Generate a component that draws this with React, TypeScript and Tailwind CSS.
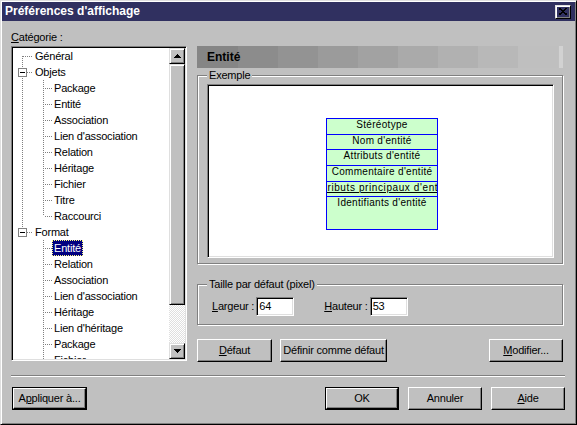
import React from "react";

const raised =
  "border border-t-white border-l-white border-r-black border-b-black shadow-[inset_-1px_-1px_0_#808080]";
const raised2 =
  "border border-t-[#dfdfdf] border-l-[#dfdfdf] border-r-black border-b-black shadow-[inset_1px_1px_0_#fff,inset_-1px_-1px_0_#808080]";
const sunken =
  "border border-t-[#808080] border-l-[#808080] border-r-white border-b-white shadow-[inset_1px_1px_0_#000,inset_-1px_-1px_0_#dfdfdf]";
const etched = "border border-[#808080] shadow-[inset_1px_1px_0_#fff,1px_1px_0_#fff]";

function Btn({ children, className, def }: { children: React.ReactNode; className: string; def?: boolean }) {
  if (def) {
    return (
      <div className={"border border-black flex " + className}>
        <div className={raised + " flex-1 flex items-center justify-center leading-[13px]"}>{children}</div>
      </div>
    );
  }
  return (
    <div className={raised + " flex items-center justify-center leading-[13px] " + className}>{children}</div>
  );
}

const dot = { stroke: "#808080", strokeDasharray: "1 1" };

function RootConn({ kind, box }: { kind: "first" | "mid" | "last"; box?: boolean }) {
  return (
    <svg width="20" height="16" className="shrink-0" shapeRendering="crispEdges">
      {kind === "first" && <line x1="9.5" y1="8" x2="9.5" y2="16" {...dot} />}
      {kind === "mid" && <line x1="9.5" y1="0" x2="9.5" y2="16" {...dot} />}
      {kind === "last" && <line x1="9.5" y1="0" x2="9.5" y2="8" {...dot} />}
      <line x1={box ? 14 : 10} y1="8.5" x2="20" y2="8.5" {...dot} />
      {box && (
        <>
          <rect x="5.5" y="4.5" width="8" height="8" fill="#fff" stroke="#808080" />
          <line x1="7" y1="8.5" x2="12" y2="8.5" stroke="#000" />
        </>
      )}
    </svg>
  );
}

function ChildConn({ cont, last }: { cont: boolean; last?: boolean }) {
  return (
    <svg width="39" height="16" className="shrink-0" shapeRendering="crispEdges">
      {cont && <line x1="9.5" y1="0" x2="9.5" y2="16" {...dot} />}
      <line x1="30.5" y1="0" x2="30.5" y2={last ? 8 : 16} {...dot} />
      <line x1="32" y1="8.5" x2="39" y2="8.5" {...dot} />
    </svg>
  );
}

type Row = {
  t: string;
  root?: "first" | "mid" | "last";
  box?: boolean;
  cont?: boolean;
  last?: boolean;
  sel?: boolean;
};

const rows: Row[] = [
  { t: "Général", root: "first" },
  { t: "Objets", root: "mid", box: true },
  { t: "Package", cont: true },
  { t: "Entité", cont: true },
  { t: "Association", cont: true },
  { t: "Lien d'association", cont: true },
  { t: "Relation", cont: true },
  { t: "Héritage", cont: true },
  { t: "Fichier", cont: true },
  { t: "Titre", cont: true },
  { t: "Raccourci", cont: true, last: true },
  { t: "Format", root: "last", box: true },
  { t: "Entité", cont: false, sel: true },
  { t: "Relation", cont: false },
  { t: "Association", cont: false },
  { t: "Lien d'association", cont: false },
  { t: "Héritage", cont: false },
  { t: "Lien d'héritage", cont: false },
  { t: "Package", cont: false },
  { t: "Fichier", cont: false },
];

function Arrow({ up }: { up?: boolean }) {
  return (
    <svg width="7" height="4" shapeRendering="crispEdges">
      {up ? <polygon points="3.5,0 7,4 0,4" fill="#000" /> : <polygon points="0,0 7,0 3.5,4" fill="#000" />}
    </svg>
  );
}

export default function App() {
  return (
    <div className="w-[577px] h-[425px] bg-[#c0c0c0] border border-t-[#dfdfdf] border-l-[#dfdfdf] border-r-black border-b-black shadow-[inset_1px_1px_0_#fff,inset_-1px_-1px_0_#808080] p-[1px] flex flex-col overflow-hidden font-['Liberation_Sans',Arial,sans-serif] text-[11px] tracking-[-0.2px] text-black">
      {/* caption */}
      <div className="h-[19px] shrink-0 bg-[#303060] flex items-center justify-between pl-[3px] pr-[4px]">
        <span className="text-white font-bold text-[12px] tracking-normal leading-[19px]">Préférences d'affichage</span>
        <div className={raised2 + " w-[16px] h-[14px] flex items-center justify-center"}>
          <svg width="8" height="7" shapeRendering="crispEdges">
            <path d="M0 0 L8 7 M8 0 L0 7" stroke="#000" strokeWidth="1.6" />
          </svg>
        </div>
      </div>

      <div className="pl-[9px] pr-[12px]">
        <div className="mt-[10px] leading-[13px]">
          <u>C</u>atégorie :
        </div>
        <div className="mt-[2px] flex gap-[10px] h-[316px]">
          {/* tree */}
          <div className={sunken + " w-[176px] h-[315px] p-[1px] bg-white flex"}>
            <div className="flex-1 overflow-hidden flex flex-col">
              {rows.map((r, i) => (
                <div key={i} className="flex h-[16px] shrink-0 items-center">
                  {r.root ? <RootConn kind={r.root} box={r.box} /> : <ChildConn cont={!!r.cont} last={r.last} />}
                  <span
                    className={
                      "px-[2px] h-[16px] leading-[16px] whitespace-nowrap " +
                      (r.sel
                        ? "bg-[#000080] text-white outline-1 outline-dotted outline-[#ffff80] -outline-offset-1"
                        : "")
                    }
                  >
                    {r.t}
                  </span>
                </div>
              ))}
            </div>
            <div className="w-[16px] flex flex-col bg-[#c0c0c0]">
              <div className={raised2 + " h-[16px] flex items-center justify-center"}>
                <Arrow up />
              </div>
              <div className={raised2 + " h-[241px]"} />
              <div className="flex-1 bg-[repeating-conic-gradient(#dfdfdf_0%_25%,#ffffff_0%_50%)] bg-size-[2px_2px]" />
              <div className={raised2 + " h-[16px] flex items-center justify-center"}>
                <Arrow />
              </div>
            </div>
          </div>

          {/* right column */}
          <div className="w-[366px] flex flex-col">
            <div className="h-[22px] flex gap-[1px]">
              <div className="w-[361px] h-[22px] pl-[10px] font-bold text-[12px] tracking-normal leading-[22px] bg-[linear-gradient(to_right,#858585_0px_41px,#8c8c8c_41px_81px,#939393_81px_121px,#9b9b9b_121px_161px,#a2a2a2_161px_201px,#aaaaaa_201px_241px,#b1b1b1_241px_281px,#b8b8b8_281px_321px,#bfbfbf_321px_361px)]">
                Entité
              </div>
              <div className="w-[4px] h-[22px] bg-[#d2d2d2]" />
            </div>

            <div className={etched + " relative mt-[7px] h-[189px] pl-[9px] pt-[8px] pr-[8px] pb-[5px] flex"}>
              <span className="absolute left-[9px] top-[-7px] px-[2px] leading-[13px] bg-[#c0c0c0]">Exemple</span>
              <div className={sunken + " flex-1 p-[1px] bg-white"}>
                <div className="pt-[32px] pl-[117px]">
                  <div className="w-[112px] h-[112px] border border-[#0000ff] bg-[#ccffcc] flex flex-col text-[10px] tracking-[0.3px] leading-[12px] text-center">
                    <div className="h-[16px] border-b border-[#0000ff]">Stéréotype</div>
                    <div className="h-[15px] border-b border-[#0000ff]">Nom d'entité</div>
                    <div className="h-[16px] border-b border-[#0000ff]">Attributs d'entité</div>
                    <div className="h-[16px] border-b border-[#0000ff] flex justify-center overflow-hidden whitespace-nowrap">
                      <span className="shrink-0">Commentaire d'entité</span>
                    </div>
                    <div className="h-[15px] border-b border-[#0000ff] flex justify-center overflow-hidden whitespace-nowrap">
                      <span className="underline shrink-0 tracking-[0.6px]">Attributs principaux d'entité</span>
                    </div>
                    <div className="flex-1">Identifiants d'entité</div>
                  </div>
                </div>
              </div>
            </div>

            <div className={etched + " relative mt-[20px] h-[41px] pt-[12px] pl-[14px] flex items-start"}>
              <span className="absolute left-[9px] top-[-7px] px-[2px] leading-[13px] bg-[#c0c0c0]">Taille par défaut (pixel)</span>
              <div className="flex items-center h-[19px] gap-[2px]">
                <span className="leading-[13px]">
                  <u>L</u>argeur :
                </span>
                <div className={sunken + " w-[38px] h-[19px] bg-white pl-[2px] leading-[17px]"}>64</div>
                <span className="leading-[13px] ml-[28px]">
                  <u>H</u>auteur :
                </span>
                <div className={sunken + " w-[38px] h-[19px] bg-white pl-[2px] leading-[17px]"}>53</div>
              </div>
            </div>

            <div className="mt-[14px] flex h-[23px]">
              <Btn className="w-[75px] h-[23px]">
                <u>D</u>éfaut
              </Btn>
              <Btn className="w-[107px] h-[23px] ml-[8px]">Définir comme défaut</Btn>
              <Btn className="w-[74px] h-[23px] ml-auto">
                <u>M</u>odifier...
              </Btn>
            </div>
          </div>
        </div>
      </div>

      <div className="mt-[13px] ml-[9px] mr-[10px] h-[2px] border-t border-t-[#808080] border-b border-b-white" />

      <div className="mt-[10px] ml-[10px] mr-[10px] flex justify-between h-[23px]">
        <Btn def className="w-[75px] h-[23px]">
          A<u>p</u>pliquer à...
        </Btn>
        <div className="flex gap-[9px]">
          <Btn def className="w-[74px] h-[23px]">
            OK
          </Btn>
          <Btn className="w-[74px] h-[23px]">Annuler</Btn>
          <Btn className="w-[74px] h-[23px]">
            <u>A</u>ide
          </Btn>
        </div>
      </div>
    </div>
  );
}
